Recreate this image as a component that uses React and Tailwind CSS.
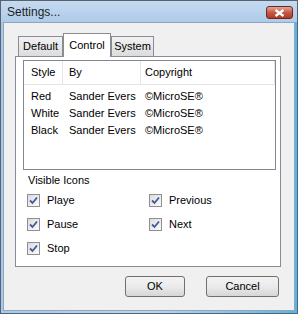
import React from "react";

const font = { fontFamily: '"Liberation Sans", Arial, sans-serif' };

function Check({ label }) {
  return (
    <div className="flex items-center h-[13px]">
      <div className="w-[13px] h-[13px] border border-[#8f8f8f] bg-gradient-to-br from-[#dcdcdc] to-[#fbfbfb] flex items-center justify-center">
        <svg width="9" height="9" viewBox="0 0 9 9">
          <path d="M1 4.5 L3.5 7 L8 1.5" fill="none" stroke="#3d5a9a" strokeWidth="1.8" />
        </svg>
      </div>
      <span className="ml-[7px] text-[11px] text-black">{label}</span>
    </div>
  );
}

function Tab({ label, active }) {
  if (active) {
    return (
      <div className="relative z-10 -mb-px h-[24px] w-[48px] bg-white border border-b-0 border-[#898c95] flex items-start justify-center pt-[3px] text-[11px] text-black">
        {label}
      </div>
    );
  }
  return (
    <div className="mt-[3px] h-[20px] bg-gradient-to-b from-[#f2f2f2] to-[#dcdcdc] border border-b-0 border-[#898c95] flex items-center justify-center text-[11px] text-black px-[6px]">
      {label}
    </div>
  );
}

export default function App() {
  const rows = [
    ["Red", "Sander Evers", "©MicroSE®"],
    ["White", "Sander Evers", "©MicroSE®"],
    ["Black", "Sander Evers", "©MicroSE®"],
  ];

  return (
    <div
      style={font}
      className="w-[298px] h-[314px] flex flex-col bg-gradient-to-r from-[#a9c9ea] via-[#bcd5ee] to-[#56b6e4] border border-[#59636f]"
    >
      <div className="h-[21px] flex items-center justify-between pl-[6px] pr-[4px] bg-gradient-to-b from-[#c6daf0] to-[#aecbe9]">
        <span className="text-[12px] text-[#1e1e1e] mt-[1px]">Settings...</span>
        <div className="w-[27px] h-[13px] mt-[2px] rounded-[3px] border border-[#6b2a20] bg-gradient-to-b from-[#e3a598] via-[#c75a44] to-[#b33a22] flex items-center justify-center">
          <svg width="11" height="8" viewBox="0 0 11 8">
            <path d="M1.5 1 L9.5 7 M9.5 1 L1.5 7" stroke="#ffffff" strokeWidth="2.2" />
          </svg>
        </div>
      </div>

      <div className="flex-1 mx-[2px] mb-[2px] bg-[#f0f0f0] border border-[#8da7c3] flex flex-col">
        <div className="ml-[14px] mt-[10px] flex items-end">
          <div className="w-[45px] flex"><div className="w-full"><Tab label="Default" /></div></div>
          <Tab label="Control" active />
          <div className="w-[43px]"><Tab label="System" /></div>
        </div>

        <div className="ml-[11px] mr-[13px] h-[211px] bg-white border border-[#898c95] flex flex-col">
          <div className="ml-[7px] mr-[4px] mt-[3px] h-[110px] border border-[#828790] bg-white flex flex-col">
            <div className="h-[24px] flex items-stretch border-b border-[#e5e5e5] text-[11px] text-black">
              <div className="w-[39px] pl-[7px] flex items-center border-r border-[#e5e5e5]">Style</div>
              <div className="w-[78px] pl-[6px] flex items-center border-r border-[#e5e5e5]">By</div>
              <div className="w-[134px] pl-[4px] flex items-center border-r border-[#e5e5e5]">Copyright</div>
            </div>
            <div className="pt-[3px] flex flex-col">
              {rows.map((r) => (
                <div key={r[0]} className="h-[17px] flex items-center text-[11px] text-black">
                  <div className="w-[39px] pl-[7px]">{r[0]}</div>
                  <div className="w-[78px] pl-[6px]">{r[1]}</div>
                  <div className="pl-[4px]">{r[2]}</div>
                </div>
              ))}
            </div>
          </div>

          <div className="ml-[12px] mt-[4px] text-[11px] text-black leading-[13px]">Visible Icons</div>

          <div className="ml-[11px] mt-[7px] grid grid-cols-[122px_1fr] gap-y-[11px]">
            <Check label="Playe" />
            <Check label="Previous" />
            <Check label="Pause" />
            <Check label="Next" />
            <Check label="Stop" />
          </div>
        </div>

        <div className="mt-[9px] mr-[15px] flex justify-end gap-[21px]">
          <button className="w-[60px] h-[21px] rounded-[3px] border border-[#707070] bg-gradient-to-b from-[#f2f2f2] via-[#ebebeb] to-[#d6d6d6] text-[11px] text-black">
            OK
          </button>
          <button className="w-[73px] h-[21px] rounded-[3px] border border-[#707070] bg-gradient-to-b from-[#f2f2f2] via-[#ebebeb] to-[#d6d6d6] text-[11px] text-black">
            Cancel
          </button>
        </div>
      </div>
    </div>
  );
}
